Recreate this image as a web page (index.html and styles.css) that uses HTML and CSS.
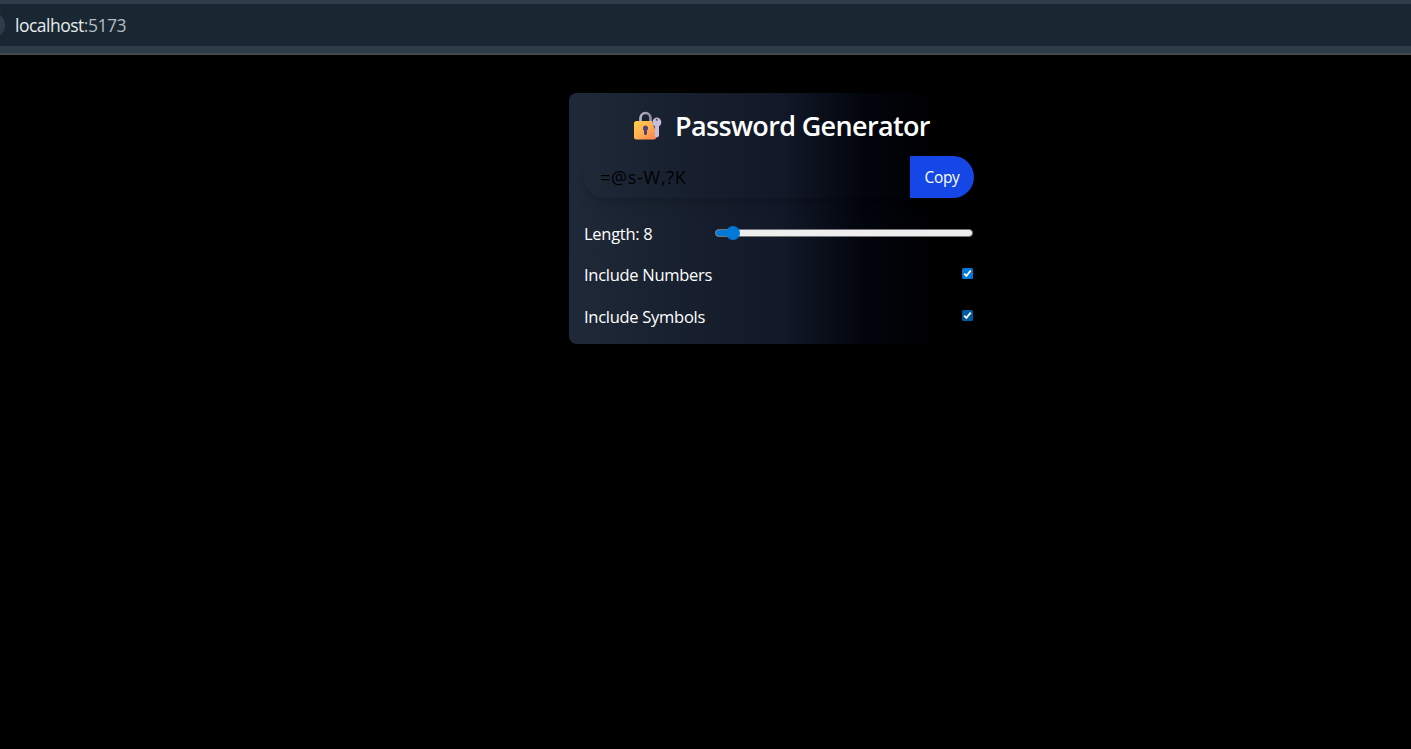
FILE: index.html
```html
<!DOCTYPE html>
<html lang="en">
<head>
<meta charset="utf-8">
<title>Password Generator</title>
<link rel="stylesheet" href="styles.css">
</head>
<body>
<header class="browser-bar">
  <div class="address"><span class="site-button"></span><span class="url"><span class="host">localhost</span><span class="port">:5173</span></span></div>
</header>
<main class="page">
  <section class="card">
    <h1 class="title">
      <svg class="lock" viewBox="0 0 28 30" width="28" height="30" aria-hidden="true">
        <defs>
          <linearGradient id="body" x1="0" y1="0" x2="1" y2="1"><stop offset="0" stop-color="#ffcf49"/><stop offset=".5" stop-color="#ffb04f"/><stop offset="1" stop-color="#ff8052"/></linearGradient>
          <linearGradient id="steel" x1="0" y1="0" x2="1" y2="0"><stop offset="0" stop-color="#b5b0bf"/><stop offset="1" stop-color="#958ca3"/></linearGradient>
        </defs>
        <path d="M6.500 11V7.500a5 5.500 0 0 1 10 0V11" fill="none" stroke="url(#steel)" stroke-width="2.700"/>
        <path d="M2.500 10H18l2 6 2 5v5.500a2 2 0 0 1-2 2H2.500A2.500 2.500 0 0 1 0 26V12.500A2.500 2.500 0 0 1 2.500 10z" fill="url(#body)"/>
        <path d="M11.500 14.500a2.700 2.700 0 0 1 1.500 4.900v3a1.500 1.500 0 0 1-3 0v-3a2.700 2.700 0 0 1 1.500-4.900z" fill="#533f79"/>
        <path d="M22.600 6.500a4.700 4.700 0 0 1 2.400 8.700v9.800l-2 1.700-2.200-1.500v-10a4.700 4.700 0 0 1 1.800-8.700z" fill="#c9bddc"/>
        <circle cx="22.700" cy="8.800" r="1" fill="#4b4057"/>
      </svg>
      <span class="title-text">Password Generator</span>
    </h1>
    <div class="password-row">
      <div class="password"><span class="password-text">=@s-W,?K</span></div>
      <button class="copy" type="button"><span class="copy-text">Copy</span></button>
    </div>
    <div class="option">
      <span class="length-text">Length: 8</span>
      <span class="track"><span class="filled"></span><span class="thumb"></span></span>
    </div>
    <div class="option">
      <span class="numbers-text">Include Numbers</span>
      <svg class="check" viewBox="0 0 11 11" width="11" height="11"><rect width="11" height="11" rx="1.500" fill="#0078d7"/><path d="M2.200 5.700l2.200 2.200 4.300-5.300" fill="none" stroke="#fff" stroke-width="1.700"/></svg>
    </div>
    <div class="option">
      <span class="symbols-text">Include Symbols</span>
      <svg class="check" viewBox="0 0 11 11" width="11" height="11"><rect width="11" height="11" rx="1.500" fill="#005a9e"/><path d="M2.200 5.700l2.200 2.200 4.300-5.300" fill="none" stroke="#fff" stroke-width="1.700"/></svg>
    </div>
  </section>
</main>
</body>
</html>
```
FILE: styles.css
```css
* { box-sizing: border-box; }
body {
  margin: 0;
  height: 749px;
  overflow: hidden;
  background: #000;
  color: #fff;
  font-family: "Open Sans", "Noto Sans", sans-serif;
}
.browser-bar {
  height: 55px;
  padding-top: 4px;
  background: #2d3c48;
  border-bottom: 2px solid #48494b;
}
.address {
  display: flex;
  align-items: center;
  height: 42px;
  background: #182732;
}
.site-button {
  width: 5px;
  height: 26px;
  margin-right: 10px;
  background: radial-gradient(circle at -8px 50%, #2d3c48 12.500px, transparent 13.500px);
}
.url { font-size: 17.5px; line-height: 24px; letter-spacing: -0.5px; color: #e6eaec; }
.port { color: #b5bcc1; }
.page { padding: 38px 0 0 569px; }
.card {
  width: 420px;
  height: 251px;
  padding: 15px;
  border-radius: 8px;
  background: linear-gradient(to right, #1f2937 0%, #111827 51%, #03050d 70%, #000 88%);
}
.title {
  display: flex;
  align-items: center;
  height: 36px;
  margin: 0 0 12px;
  padding-left: 50px;
  font-size: 27px;
  font-weight: 600;
  line-height: 36px;
  letter-spacing: -0.65px;
  white-space: nowrap;
}
.lock { flex: none; margin-right: 13px; }
.password-row {
  display: flex;
  height: 42px;
  margin-bottom: 15px;
  border-radius: 21px;
  box-shadow: 0 10px 15px -3px rgba(0, 0, 0, .1), 0 4px 6px -4px rgba(0, 0, 0, .1);
}
.password {
  display: flex;
  align-items: center;
  width: 326px;
  padding-left: 16px;
  color: #000;
  font-size: 18px;
  letter-spacing: 0.7px;
}
.copy {
  width: 64px;
  height: 42px;
  padding: 0;
  border: 0;
  border-radius: 0 21px 21px 0;
  background: #1447e6;
  color: #fff;
  font: 15.5px/24px "Open Sans", "Noto Sans", sans-serif;
  letter-spacing: -0.3px;
}
.option {
  display: flex;
  align-items: center;
  justify-content: space-between;
  height: 41.6px;
  padding-right: 1px;
  font-size: 16.5px;
  line-height: 24px;
  letter-spacing: -0.28px;
}
.track {
  position: relative;
  width: 258px;
  height: 8px;
  margin-bottom: 1px;
  border: 1px solid #777579;
  border-radius: 4px;
  background: #efeeee;
}
.filled {
  display: block;
  width: 18px;
  height: 6px;
  border-radius: 3px 0 0 3px;
  background: #0078d7;
}
.thumb {
  position: absolute;
  top: -4px;
  left: 10px;
  width: 14px;
  height: 14px;
  border-radius: 50%;
  background: #0078d7;
}
.check { margin-bottom: 3px; }
```
